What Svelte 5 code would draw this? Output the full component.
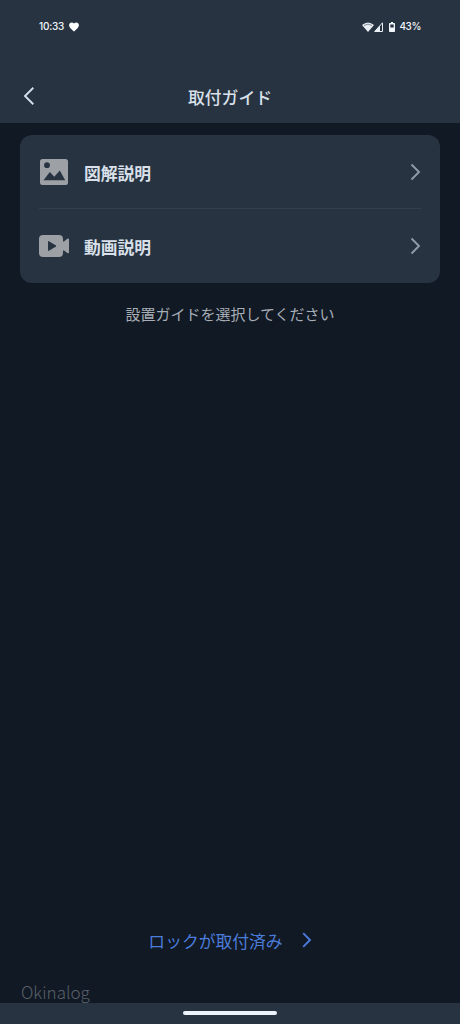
<script>
  const time = "10:33";
  const battery = 43;

  const guides = [
    { id: "image", label: "図解説明" },
    { id: "video", label: "動画説明" },
  ];
</script>

<div class="screen">
  <header>
    <div class="status">
      <div class="left">
        <span>{time}</span>
        <svg width="10" height="10" viewBox="0 0 10 10">
          <path d="M5 9.5C3.5 8.3.1 6 .1 3.1.1.3 3.5-.3 5 1.6 6.5-.3 9.9.3 9.9 3.1 9.9 6 6.5 8.3 5 9.5Z" fill="#fff" />
        </svg>
      </div>
      <div class="right">
        <svg width="12" height="10" viewBox="0 0 12 10">
          <path d="M0 3Q6-2 12 3L6 10Z" fill="#e9eff5" />
          <path d="M2 3.5Q6 .7 10 3.5" fill="none" stroke="#59636f" stroke-width=".7" />
        </svg>
        <svg width="9" height="10" viewBox="0 0 9 10">
          <path d="M8.5.8V9.5H.7Z" fill="none" stroke="#e9eff5" />
          <path d="M6 3.5V9.5H.5Z" fill="#e9eff5" />
        </svg>
        <svg class="battery" width="6" height="10" viewBox="0 0 6 10">
          <path d="M2 0h2v1h1.2q.8 0 .8.8v7.4q0 .8-.8.8H.8q-.8 0-.8-.8V1.8Q0 1 .8 1H2Z" fill="#f2f6fa" />
          <path d="M1.3 2.5h3.4v3H1.3z" fill="#283342" />
        </svg>
        <span>{battery}%</span>
      </div>
    </div>
    <nav>
      <button class="back" aria-label="戻る">
        <svg width="12" height="20" viewBox="0 0 12 20">
          <path d="M10.3 1.8 2 10l8.3 8.2" fill="none" stroke="#d5deea" stroke-width="1.9" />
        </svg>
      </button>
      <h1>取付ガイド</h1>
    </nav>
  </header>

  <main>
    <div class="card">
      {#each guides as guide (guide.id)}
        <button class="row">
          <span class="icon">
            {#if guide.id === "image"}
              <svg width="30" height="28" viewBox="0 0 30 28">
                <rect x="1" y="1" width="28" height="26" rx="2.5" fill="#9da1a5" />
                <circle cx="8" cy="7.2" r="2.9" fill="#283342" />
                <path d="M4.5 22.3 10.8 14l4.5 4.8 5.5-6.3 5.4 9.8Z" fill="#283342" />
              </svg>
            {:else}
              <svg width="30" height="28" viewBox="0 0 30 28">
                <rect x="0" y="3" width="24" height="22" rx="4" fill="#9da1a5" />
                <path d="M23 9.5H25L28.3 6.8Q30 5.8 30 7.3V20.2Q30 21.9 28.3 21L25 18.5H23Z" fill="#9da1a5" />
                <path d="M9.5 9.5 17 14 9.5 18.5Z" fill="#283342" stroke="#283342" stroke-linejoin="round" />
              </svg>
            {/if}
          </span>
          <span class="label">{guide.label}</span>
          <svg width="11" height="18" viewBox="0 0 11 18">
            <path d="M1.5 1.5 9 9l-7.5 7.5" fill="none" stroke="#919ba7" stroke-width="1.9" />
          </svg>
        </button>
      {/each}
    </div>
    <p class="hint">設置ガイドを選択してください</p>
  </main>

  <button class="done">
    <span>ロックが取付済み</span>
    <svg width="10" height="16" viewBox="0 0 10 16">
      <path d="M1.2 1.2 8 8l-6.8 6.8" fill="none" stroke="#4b7cdb" stroke-width="1.9" />
    </svg>
  </button>

  <footer>
    <span class="home"></span>
    <span class="watermark">Okinalog</span>
  </footer>
</div>

<style>
  :global(body) {
    background: #111924;
  }

  .screen {
    display: flex;
    flex-direction: column;
    height: 1024px;
    background: #111924;
    color: #d9e0e9;
    font-family: "Noto Sans CJK JP", sans-serif;
  }

  button {
    padding: 0;
    border: 0;
    background: none;
    color: inherit;
    font: inherit;
    cursor: pointer;
  }

  svg {
    display: block;
    flex: none;
  }

  header {
    height: 123px;
    background: #283342;
  }

  .status {
    display: flex;
    justify-content: space-between;
    box-sizing: border-box;
    height: 70px;
    padding: 20px 39px 0;
    color: #f2f6fa;
    font: 500 10px/12px Inter, sans-serif;
  }

  .left,
  .right {
    display: flex;
    align-items: center;
    height: 12px;
  }

  .left {
    gap: 5px;
  }

  .left svg,
  .right svg {
    margin-top: 1px;
  }

  .left span {
    letter-spacing: -0.2px;
  }

  .right span {
    letter-spacing: -0.4px;
  }

  .right .battery {
    margin: 1px 4px 0 6px;
  }

  nav {
    display: grid;
    grid-template-columns: 80px 1fr 80px;
    align-items: center;
    height: 53px;
  }

  .back {
    margin-top: -2px;
    padding-left: 23px;
  }

  h1 {
    margin: 0;
    font-size: 16.8px;
    font-weight: 500;
    line-height: 24px;
    text-align: center;
  }

  main {
    flex: 1;
    padding: 12px 20px 0;
  }

  .card {
    padding: 0 19px;
    border-radius: 12px;
    background: #283342;
  }

  .row {
    display: flex;
    align-items: center;
    box-sizing: border-box;
    width: 100%;
    height: 74px;
  }

  .row:first-child {
    border-bottom: 1px solid #333f4e;
  }

  .label {
    flex: 1;
    margin: 2px 0 0 15px;
    font-size: 16.8px;
    font-weight: 700;
    line-height: 24px;
    text-align: left;
  }

  .hint {
    margin: 19px 0 0;
    color: #a7adb5;
    font-size: 15px;
    line-height: 24px;
    text-align: center;
  }

  .done {
    display: flex;
    align-items: center;
    justify-content: center;
    gap: 19px;
    height: 24px;
    margin-bottom: 51px;
    color: #4b7cdb;
    font-size: 16.8px;
    line-height: 24px;
  }

  .done span {
    margin-top: 2px;
  }

  footer {
    position: relative;
    display: flex;
    justify-content: center;
    height: 21px;
    background: #283342;
  }

  .home {
    width: 94px;
    height: 4px;
    margin-top: 8px;
    border-radius: 2px;
    background: #edf3fa;
  }

  .watermark {
    position: absolute;
    left: 21px;
    top: -23px;
    color: #59606a;
    font-size: 17px;
    font-weight: 300;
    line-height: 24px;
  }
</style>
